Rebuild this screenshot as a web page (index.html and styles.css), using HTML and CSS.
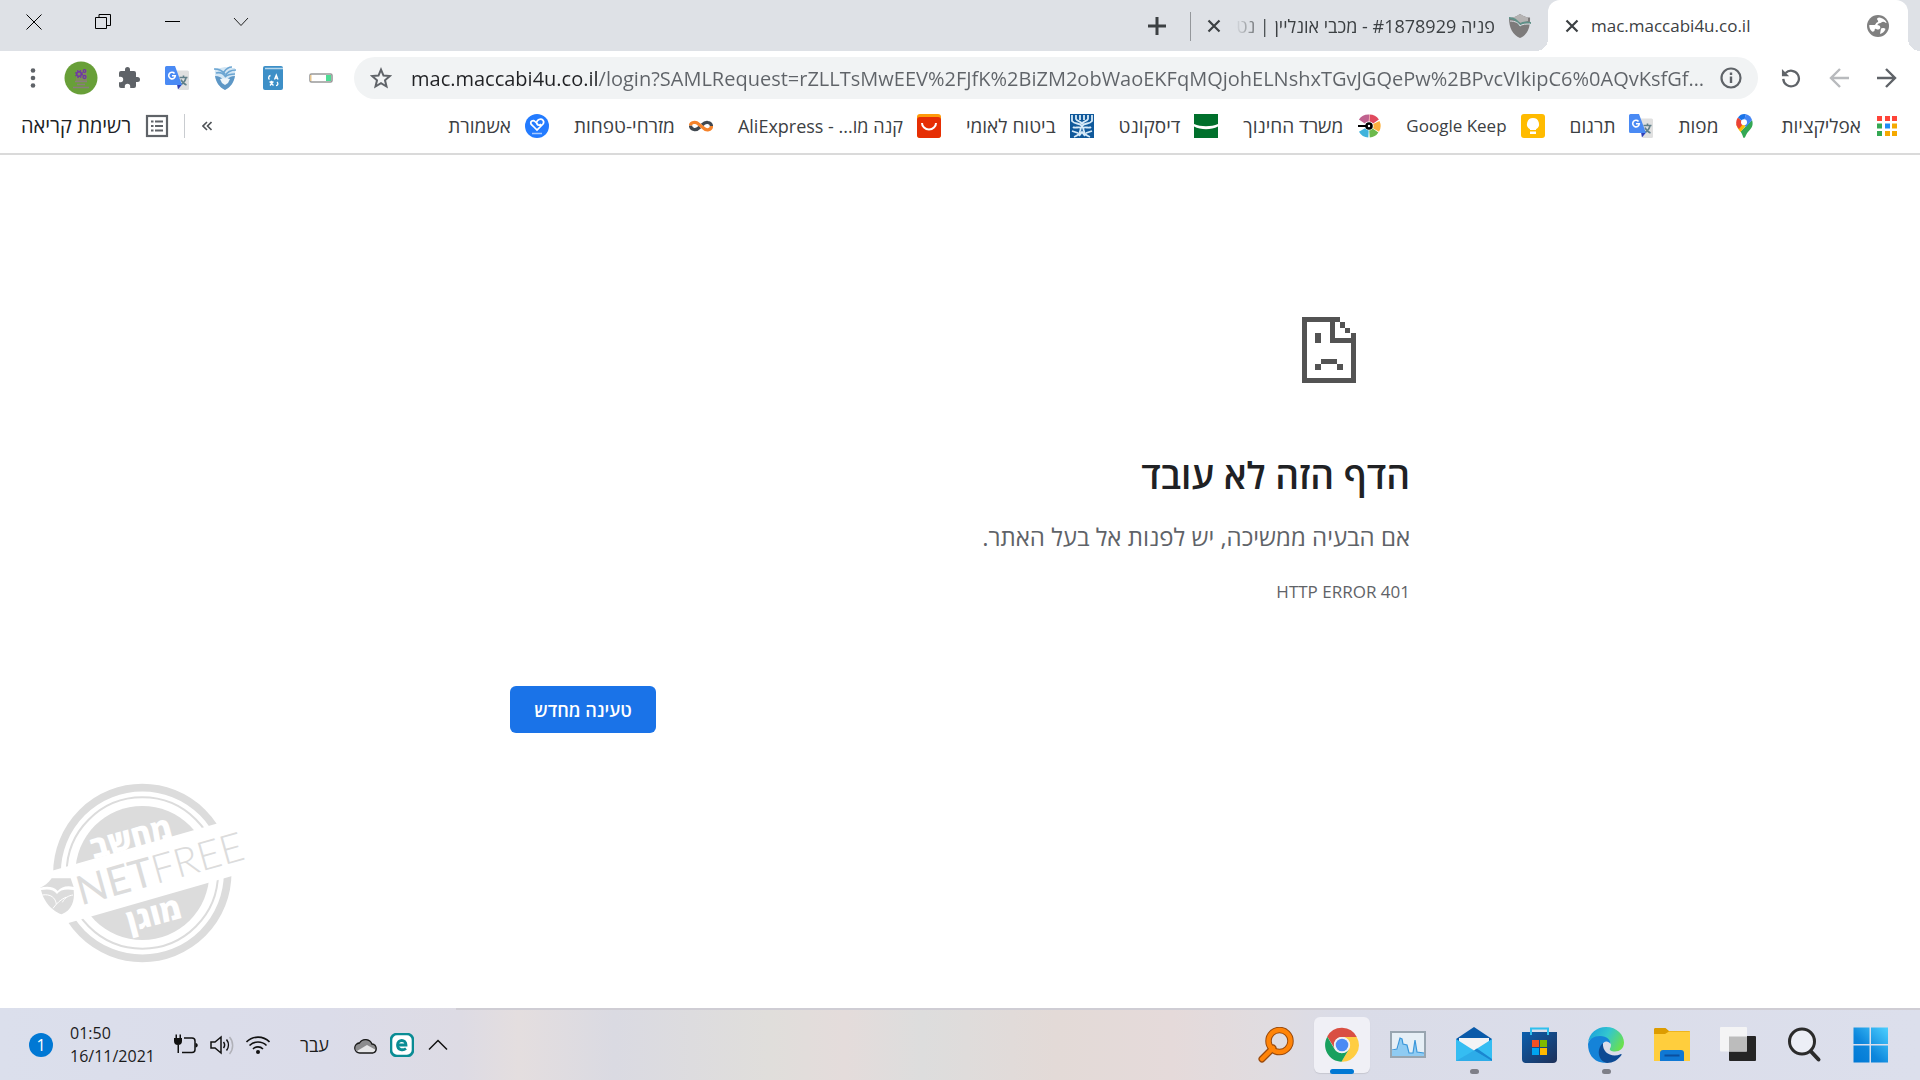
FILE: index.html
```
<!DOCTYPE html>
<html lang="he" dir="rtl">
<head>
<meta charset="utf-8">
<title>mac.maccabi4u.co.il</title>
<link rel="stylesheet" href="styles.css">
</head>
<body>
<svg class="defs" width="0" height="0" aria-hidden="true">
  <symbol id="translate" viewBox="0 0 24 24">
    <path fill="#e0e0e0" d="M10 4.500h12.500a1.500 1.500 0 0 1 1.500 1.500v16.500a1.500 1.500 0 0 1-1.500 1.500H14z"/>
    <path fill="none" stroke="#607f89" stroke-width="1.600" d="M14.500 11.500h8M18.500 9.500v2M16 13.500c1 2.500 3 4.500 5.500 5.500M21 11.500c-.5 3-3 6-5.500 7"/>
    <path fill="#3040b8" d="M12 18.500h5l-4 5z"/>
    <path fill="#4a8af4" d="M1.500 0H10l7 19H1.500A1.500 1.500 0 0 1 0 17.500v-16A1.500 1.500 0 0 1 1.500 0z"/>
    <path fill="none" stroke="#fff" stroke-width="1.600" d="M9.500 7.400A3.300 3.300 0 1 0 10.300 9.800H7"/>
  </symbol>
  <symbol id="close" viewBox="0 0 14 14"><path d="M1.500 1.500l11 11M12.500 1.500l-11 11" fill="none" stroke="#3c4043" stroke-width="2.200"/></symbol>
</svg>

<header class="browser">
  <div class="tabstrip">
    <div class="tabs">
      <div class="tab tab-active">
        <svg class="favicon" viewBox="0 0 22 22"><circle cx="11" cy="11" r="11" fill="#808080"/><path fill="#fff" d="M12 2.500c-2 .3-2.500 1.500-1.500 2.500s1 2-.5 2.500-1 2.500-3 2.500H2.300c-.3 3 1.200 5.300 3 6.700 1.700 0 2.400-.7 2.400-2s1.300-1.200 2-.5 3 .2 3.500-1-.5-3-2-3 0-2 1.500-2 1.800-1.500 3.500-1.500 2 1.500 3.400 1.200C19 5.500 16 2.800 12 2.500z"/><path fill="#fff" d="M14 13.500c1.500-1 3.500-.5 4.500.5-.8 2.500-3 4.500-5.500 5z"/></svg>
        <span class="tab-title" dir="ltr">mac.maccabi4u.co.il</span>
        <button class="tab-close" aria-label="סגירה"><svg viewBox="0 0 14 14"><use href="#close"/></svg></button>
      </div>
      <div class="tab tab-idle">
        <svg class="favicon" viewBox="0 0 22 24"><path fill="#7d7b7b" d="M0 4C5 4 8 2 11 0c3 2 6 3.500 10 3.500C21.500 14 18 21 11 24 4 21 0 14 0 4z"/><path fill="#b5b3b3" d="M3 3.500C6 3 9 1.500 11 0c3 2 5 3 8 3.300L19 7l-7 2-6-3z"/><path fill="none" stroke="#5f9188" stroke-width="2" d="M0 4c4 0 8 2 11 7 2-3 6-3 11-2"/><path fill="none" stroke="#dee1e6" stroke-width="1" d="M1 7c5 0 9 2 10 5 2-2 6-2 10-2"/></svg>
        <span class="tab-title">פניה #1878929 - מכבי אונליין | נטפרי</span>
        <button class="tab-close" aria-label="סגירה"><svg viewBox="0 0 14 14"><use href="#close"/></svg></button>
      </div>
      <button class="newtab" aria-label="כרטיסייה חדשה"><svg viewBox="0 0 18 18"><path d="M9 0v18M0 9h18" stroke="#3c4043" stroke-width="3"/></svg></button>
    </div>
    <div class="window-controls">
      <button aria-label="חיפוש"><svg viewBox="0 0 16 16"><path d="M1 4l7 7.500L15 4" fill="none" stroke="#222"/></svg></button>
      <button aria-label="מזעור"><svg viewBox="0 0 16 16"><path d="M1 7.500h15" stroke="#000"/></svg></button>
      <button aria-label="שחזור"><svg viewBox="0 0 16 16"><path d="M.5 3.500h11v11H.5zM4 3V.500h11.500v11H12" fill="none" stroke="#000"/></svg></button>
      <button aria-label="סגירה"><svg viewBox="0 0 16 16"><path d="M.5.500l15 15M15.500.500l-15 15" fill="none" stroke="#000"/></svg></button>
    </div>
  </div>

  <div class="toolbar">
    <nav class="nav-buttons">
      <button aria-label="קדימה"><svg viewBox="0 0 20 20"><path d="M0 10h18M9 1l9 9-9 9" fill="none" stroke="#5f6368" stroke-width="2.400"/></svg></button>
      <button aria-label="אחורה" disabled><svg viewBox="0 0 20 20"><path d="M20 10H2M11 1l-9 9 9 9" fill="none" stroke="#b8babd" stroke-width="2.400"/></svg></button>
      <button aria-label="טעינה מחדש"><svg viewBox="0 0 22 22"><path d="M5 5.500A8.600 8.600 0 1 1 2.500 12" fill="none" stroke="#5f6368" stroke-width="2.500"/><path d="M1 1v8h8z" fill="#5f6368"/></svg></button>
    </nav>
    <div class="omnibox">
      <svg class="i22" viewBox="0 0 22 22"><circle cx="11" cy="11" r="9.500" fill="none" stroke="#5f6368" stroke-width="2.200"/><path d="M11 9.500V16M11 5.500V8" stroke="#5f6368" stroke-width="2.400"/></svg>
      <input class="url" dir="ltr" aria-label="כתובת" value="mac.maccabi4u.co.il/login?SAMLRequest=rZLLTsMwEEV%2FJfK%2BiZM2obWaoEKFqMQjohELNshxTGvJGQePw%2BPvcVIkipC6%0AQvKsfGf…">
      <button class="star" aria-label="סימנייה"><svg class="i22" viewBox="0 0 22 22"><path d="M11 2.600l2.500 6 6.300.5-4.800 4.200 1.500 6.200-5.500-3.300-5.500 3.300L7 13.300 2.200 9.100l6.300-.5z" fill="none" stroke="#5f6368" stroke-width="2"/></svg></button>
    </div>
    <div class="extensions">
      <button aria-label="סוללה"><svg viewBox="0 0 24 24"><rect x="1" y="8" width="22" height="8" rx="1.500" fill="#fff" stroke="#999" stroke-width="1.600"/><path fill="#4ddc94" d="M17 9h5v6h-5z"/><path fill="#e7c58e" d="M1 9h1.500v6H1z"/></svg></button>
      <button aria-label="מילון"><svg viewBox="0 0 24 24"><rect x="2" y="0" width="20" height="24" rx="2" fill="#3d8fc7"/><path d="M4 2.500h18" stroke="#b8d8ec" stroke-width="1.500"/><path d="M8.500 13.500c-1.500-1-1-3.500 1-4M13.500 13.500l1.800-4.500 1.700 4.500M14 12.200h2.500M8.500 16h4M10.500 14.800v1.500M9 19.500l3-3.500M9.500 16.500l3 3M15 19.500c2 0 2.500-2 1-3.500" fill="none" stroke="#fff" stroke-width="1.300"/></svg></button>
      <button aria-label="נטפרי"><svg viewBox="0 0 24 24"><path fill="#d3e6f4" d="M2 2c4 0 7 0 10-1 3 1 6 1 10 1 1 11-3 18-10 22C5 20 1 13 2 2z"/><path fill="#5d97c6" d="M2 10c4 0 6 1 8 4l2-2 2 2c2-3 4-4 8-4-1 6-4 11-10 14C6 21 3 16 2 10z"/><path fill="#eef5fa" d="M7 13l5-1 5 1-2 4-3 2-3-2z"/><path d="M1 3c5 0 8 1 11 5M3 7c4-1 7 0 9 3 2-4 6-6 11-6M11 6c2-3 5-5 8-5M12 11c3-3 6-3 10-3" fill="none" stroke="#6ba5d2" stroke-width="1.600"/></svg></button>
      <button aria-label="תרגום"><svg viewBox="0 0 24 24"><use href="#translate"/></svg></button>
      <button aria-label="תוספים"><svg viewBox="0 0 24 24"><path fill="#5f6368" d="M20.500 11H19V7a2 2 0 0 0-2-2h-4V3.500a2.500 2.500 0 0 0-5 0V5H4a2 2 0 0 0-2 2v3.800h1.500a2.700 2.700 0 0 1 0 5.400H2V20a2 2 0 0 0 2 2h3.800v-1.500a2.700 2.700 0 0 1 5.400 0V22H17a2 2 0 0 0 2-2v-4h1.500a2.500 2.500 0 0 0 0-5z"/></svg></button>
      <button class="profile" aria-label="פרופיל"><svg viewBox="0 0 34 34"><circle cx="17" cy="17" r="16.500" fill="#689f38"/><path fill="#7d8c5a" d="M12 9h11v11H12z"/><g fill="none" stroke="#6f35a5"><circle cx="15" cy="13" r="2.300" stroke-width="1.500"/><circle cx="15" cy="13" r="3.500" stroke-width="1.200" stroke-dasharray="1.400 1.400"/><circle cx="20.500" cy="10" r="1.300" stroke-width="1.200"/><circle cx="20.500" cy="16" r="1.500" stroke-width="1.300"/></g><path d="M11 20.500h12M13 23.500h8M9 26.500h16" stroke="#8a7b7e" stroke-width="1.500"/></svg></button>
      <button aria-label="תפריט"><svg viewBox="0 0 24 24"><g fill="#5f6368"><circle cx="12" cy="4.500" r="2.300"/><circle cx="12" cy="12" r="2.300"/><circle cx="12" cy="19.500" r="2.300"/></g></svg></button>
    </div>
  </div>

  <nav class="bookmarks">
    <a href="#apps"><svg viewBox="0 0 24 24"><path fill="#ff4438" d="M2 2h5v5H2zM10 2h5v5h-5zM17 2h5v5h-5z"/><path fill="#34a853" d="M2 9.500h5v5H2zM2 17h5v5H2z"/><path fill="#1e8cf5" d="M10 9.500h5v5h-5z"/><path fill="#f5a900" d="M17 9.500h5v5h-5zM10 17h5v5h-5zM17 17h5v5h-5z"/></svg><span>אפליקציות</span></a>
    <a href="#maps"><svg viewBox="0 0 24 24"><path fill="#34a853" d="M12 24c-1.200 0-1-3-3.500-6.500L20 6c2 6-1 8.500-4 12-2.500 3-2.700 6-4 6z"/><path fill="#fbbc04" d="M8.500 18c-1.800-2.300-3.600-4.500-4.200-7.500L15 10z"/><path fill="#ea4335" d="M4.300 10.500c-.5-2.500.2-5 1.700-7L12 9l-5 6c-1.300-1.500-2.300-3-2.700-4.500z"/><path fill="#1a73e8" d="M6 3.500A8 8 0 0 1 14 .200L12 7 9.500 6.500z"/><path fill="#4285f4" d="M14 .200c3 .6 5.200 2.800 6 5.800l-6 7-3-4z"/><circle cx="12" cy="8.300" r="3" fill="#fff"/></svg><span>מפות</span></a>
    <a href="#translate-page"><svg viewBox="0 0 24 24"><use href="#translate"/></svg><span>תרגום</span></a>
    <a href="#keep"><svg viewBox="0 0 24 24"><rect width="24" height="24" rx="3" fill="#fb0"/><path fill="#fff" d="M12 4a6 6 0 0 1 3 11.200V16H9v-.8A6 6 0 0 1 12 4zM9 17.500h6V20H9z"/></svg><span class="latin">Google Keep</span></a>
    <a href="#edu"><svg viewBox="0 0 24 24"><g fill="none" stroke-width="7"><path stroke="#c0628f" d="M4.800 7.500A8 8 0 0 1 12 4"/><path stroke="#e04a5e" d="M12.500 4A8 8 0 0 1 19 7.500"/><path stroke="#fdb03d" d="M19.300 8.500a8 8 0 0 1-.3 7.500"/><path stroke="#6cb94b" d="M18.500 16.500A8 8 0 0 1 12.500 20"/><path stroke="#3fb3dc" d="M11.500 20A8 8 0 0 1 5 16"/></g><circle cx="12" cy="12" r="3.800"/><path d="M1 12h8" stroke="#000" stroke-width="2"/><circle cx="12" cy="12" r="1.200" fill="#fff"/></svg><span>משרד החינוך</span></a>
    <a href="#discount"><svg viewBox="0 0 24 24"><path fill="#00702c" d="M0 0h24v24H0z"/><path fill="#fff" d="M0 10c7 3 17 3 24 0v2.500c-7 3.500-17 3.500-24 0z"/></svg><span>דיסקונט</span></a>
    <a href="#btl"><svg viewBox="0 0 24 24"><path fill="#10599b" d="M0 0h24v24H0z"/><path d="M2 1v6c3 4 7 1 10 5s0 8 8 11M22 1v6c-3 4-7 1-10 5s0 8-8 11M6 1v4c1 3 5 1 6 5 1-4 5-2 6-5V1M10 1v5M14 1v5M3 13c2 2 6-1 8 1M21 13c-2 2-6-1-8 1M2 17l6 2M22 17l-6 2M9 22l3-4 3 4" fill="none" stroke="#d7eaf8" stroke-width="1.800"/></svg><span>ביטוח לאומי</span></a>
    <a href="#ali"><svg viewBox="0 0 24 24"><rect width="24" height="24" rx="3" fill="#ff9a0a"/><path fill="#e62e04" d="M0 6c0-2 1-3 3-3h18c2 0 3 1 3 3v15a3 3 0 0 1-3 3H3a3 3 0 0 1-3-3z"/><path d="M5 9a7 6.500 0 0 0 14 0" fill="none" stroke="#fff" stroke-width="2"/></svg><span class="mixed" dir="ltr">AliExpress - ...קנה מו</span></a>
    <a href="#mizrahi"><svg viewBox="0 0 24 24"><g fill="none" stroke-width="3.200"><path stroke="#414850" d="M13 11c2-2 4-3 6-2.500 2.500.5 3.500 2 3.500 4M11 13c-2 2-4 3-6 2.500-2.500-.5-3.500-2-3.500-4"/><path stroke="#f5832b" d="M1.500 11.500c0-3 5-4.500 8-1.500l5 4c3 3 8 2 8-2"/></g></svg><span>מזרחי-טפחות</span></a>
    <a href="#ashmoret"><svg viewBox="0 0 24 24"><circle cx="12" cy="12" r="12" fill="#237bff"/><path d="M13 10.500L10 7.500c-2-2-5 0-4 2.500.5 1 1.500 1.500 3 3l3 3 6-6c2-3-1-6-4-4.500-2 1-3 3-2 4.500s3 1.500 4 0" fill="none" stroke="#fff" stroke-width="1.700"/><path d="M7 19.500h10" stroke="#a9cbff" stroke-width="1.500"/></svg><span>אשמורת</span></a>
    <div class="bookmarks-end">
      <button class="more" aria-label="עוד סימניות"><svg viewBox="0 0 10 10"><path d="M5 1L1 5l4 4M9.500 1l-4 4 4 4" fill="none" stroke="#4f5357" stroke-width="1.600"/></svg></button>
      <button class="reading"><svg viewBox="0 0 24 24"><rect x="2" y="2" width="20" height="20" fill="none" stroke="#5f6368" stroke-width="2.200"/><path d="M6 7.500h2.500M6 12h2.500M6 16.500h2.500M10 7.500h8M10 12h8M10 16.500h8" stroke="#5f6368" stroke-width="2"/></svg><span>רשימת קריאה</span></button>
    </div>
  </nav>
</header>

<main class="page">
  <div class="error">
    <svg class="sad" viewBox="0 0 54 66" fill="#535353" shape-rendering="crispEdges"><path d="M0 0h38v5H5v56h44V26H28V5h5v16h16v-5h5v50H0z"/><path d="M38 5h5v6h-5zM43 11h5v5h-5zM13 16h6v10h-6zM19 42h16v5H19zM13 47h6v6h-6zM35 47h6v6h-6z"/></svg>
    <h1>הדף הזה לא עובד</h1>
    <p class="lead">אם הבעיה ממשיכה, יש לפנות אל בעל האתר.</p>
    <p class="code">HTTP ERROR 401</p>
    <button class="reload">טעינה מחדש</button>
  </div>
  <svg class="stamp" viewBox="50 35 630 546" direction="ltr">
    <g fill="none" stroke="#dcdcdc"><circle cx="366" cy="308" r="256" stroke-width="23"/><circle cx="366" cy="308" r="227" stroke-width="6"/></g>
    <circle cx="366" cy="308" r="201" fill="#dcdcdc"/>
    <path fill="#fff" d="M40 317L690 131v170L40 488z"/>
    <g transform="rotate(-15.700 190 403)" fill="#dcdcdc"><text class="net" x="182" y="403">NET<tspan class="free">FREE</tspan></text></g>
    <g transform="rotate(-15 335 213)" fill="#fff"><text class="he" x="335" y="234" text-anchor="middle">מחשב</text></g>
    <g transform="rotate(-15 403 440)" fill="#fff"><text class="he" x="403" y="464" text-anchor="middle">מוגן</text></g>
    <path fill="#dcdcdc" d="M94 324h57l9 26c-20-5-38 0-48 12-11-13-32-16-54-9 14-6 26-14 36-29z"/>
    <path fill="#dcdcdc" d="M62 359c22-4 38-2 48 12 9-13 28-16 50-12 4 33-6 61-36 73-10-3-50-22-62-73z"/>
    <path d="M66 374c24-4 40 8 42 28M126 396c8-14 18-20 32-22M98 414c10-14 22-26 40-34" fill="none" stroke="#fff" stroke-width="3"/>
  </svg>
</main>

<footer class="taskbar">
  <div class="apps">
    <button aria-label="התחל"><svg viewBox="0 0 36 36"><defs><linearGradient id="win" x1="1" y1="0" x2="0" y2="1"><stop offset="0" stop-color="#4cd0ff"/><stop offset=".6" stop-color="#0d86dc"/><stop offset="1" stop-color="#0078d4"/></linearGradient></defs><path fill="url(#win)" d="M1.500.500h16v16.500h-16zM19 .500h17v16.500H19zM1.500 18.500h16v17h-16zM19 18.500h17v17H19z"/></svg></button>
    <button aria-label="חיפוש"><svg viewBox="0 0 36 36"><circle cx="16" cy="14.500" r="12.500" fill="#eceef6" stroke="#2b2b2b" stroke-width="3"/><path d="M25 24.500l7.500 8" stroke="#2b2b2b" stroke-width="4" stroke-linecap="round"/></svg></button>
    <button aria-label="תצוגת משימות"><svg viewBox="0 0 36 36"><rect x="9" y="9" width="27" height="25" rx="1" fill="#252525"/><rect x="0" y="0" width="27" height="24.500" rx="1" fill="#f4f4f5"/><path fill="#bcbcbc" d="M9 9.500h18v15H9z"/></svg></button>
    <button aria-label="סייר הקבצים"><svg viewBox="0 0 36 36"><path fill="#dd9c00" d="M0 2.500C0 1.500.5 1 1.500 1h10L15 4h20c.5 0 1 .5 1 1v5H0z"/><path fill="#ffce3d" d="M0 7h11l4-2.500h21V34H0z"/><path fill="#0f78d4" d="M6 34V26c0-2 1-3 3-3h18c2 0 3 1 3 3v8z"/><path d="M10.500 28.500h15" stroke="#0b4f9e" stroke-width="2"/></svg></button>
    <button class="running" aria-label="Edge"><svg viewBox="0 0 36 36"><defs><linearGradient id="edge" x1="0" y1=".2" x2="1" y2=".6"><stop offset="0" stop-color="#1aa0dc"/><stop offset=".5" stop-color="#33c6cf"/><stop offset="1" stop-color="#6ae04f"/></linearGradient></defs><path fill="url(#edge)" d="M0 16C1 6 9 0 18 0c11 0 18 8 18 15.500 0 6-4.500 9-9 9-4 0-6-1.500-5-3 2-3 1-8-4-9C10 10 1 11 0 16z"/><path fill="#1583d8" d="M0 17C1 12 6 9 12 9c7 0 10.500 4 10.500 8-2-4-8-3.500-8.500 2s4 12 11 13.500c-3 3.500-8 3.500-11 3C5 34 0 27 0 17z"/><path fill="#0c4a94" d="M15 16c-7 6-5 18 4 20 6 0 11-3 14.500-8 .3-.7-.3-1.200-1-.8C24 31 14 26 15 16z"/></svg></button>
    <button aria-label="Microsoft Store"><svg viewBox="0 0 36 36"><defs><linearGradient id="store" x1="0" y1="0" x2="1" y2="1"><stop offset="0" stop-color="#0b5fae"/><stop offset="1" stop-color="#1e3058"/></linearGradient></defs><path d="M9 8V1.500h17V8" fill="none" stroke="#2fc0ee" stroke-width="2"/><path fill="url(#store)" d="M0 5h35v27a4 4 0 0 1-4 4H4a4 4 0 0 1-4-4z"/><path fill="#f25022" d="M10 13h7v7h-7z"/><path fill="#7fba00" d="M18 13h7v7h-7z"/><path fill="#00a4ef" d="M10 21h7v7h-7z"/><path fill="#ffb900" d="M18 21h7v7h-7z"/><path d="M9 8V5M26 8V5" stroke="#2fc0ee" stroke-width="2"/></svg></button>
    <button class="running" aria-label="דואר"><svg viewBox="0 0 36 36"><path fill="#0a5aa9" d="M0 12L18 0l18 12v6H0z"/><path fill="#f3f3f5" d="M3 11h30v10L18 28 3 21z"/><path fill="#35bdf2" d="M0 12l18 11.500L36 12v22H0z"/><path fill="#1a86d0" d="M18 23.500L36 34H0z" opacity=".3"/><path fill="#1a86d0" d="M14 21l4 2.500 3-2L36 32v2z"/></svg></button>
    <button aria-label="מוניטור משאבים"><svg viewBox="0 0 36 36"><rect x="1" y="5" width="34" height="25" fill="#e6eff6" stroke="#98a5b0" stroke-width="2"/><path fill="#8fcbf2" d="M2 24l6-2 2-11 2 1 1 5 4 1 2 8h4l2-13 2 12 7 1v3H2z"/><path fill="none" stroke="#3a97da" stroke-width="1.200" d="M2 23l5-1 3-11 2 1 1 5 4 1 2 8h4l2-13 2 12 7 1"/></svg></button>
    <button class="running current" aria-label="Chrome"><svg viewBox="0 0 36 36"><path fill="#d94f43" d="M3.200 9.500A16.600 16.600 0 0 1 32.800 10H18a8 8 0 0 0-7 12z"/><path fill="#ffcd42" d="M32.700 10A16.600 16.600 0 0 1 17.500 34.700L25 22a8 8 0 0 0-7-12z"/><path fill="#18a05e" d="M3.300 9.800A16.600 16.600 0 0 0 17.500 34.700L25 22c-4 6-12 5-14.500 0z"/><circle cx="18" cy="18" r="8" fill="#f1f1f1"/><circle cx="18" cy="18" r="6.300" fill="#4a8af4"/></svg></button>
    <button aria-label="Everything"><svg viewBox="0 0 36 36"><g fill="none" stroke-linecap="round"><path d="M15 21L4 32" stroke="#9a4a0c" stroke-width="7"/><circle cx="21.500" cy="14" r="11" stroke="#9a4a0c" stroke-width="6.500"/><path d="M15 21L4 32" stroke="#ff8408" stroke-width="4.500"/><circle cx="21.500" cy="14" r="11" stroke="#ff8408" stroke-width="4.500"/></g></svg></button>
  </div>
  <div class="tray">
    <button aria-label="הצגת סמלים מוסתרים"><svg viewBox="0 0 24 24"><path d="M3 16.500L12 7.500l9 9" fill="none" stroke="#111" stroke-width="1.500"/></svg></button>
    <svg viewBox="0 0 24 24"><rect x="1" y="1" width="22" height="22" rx="6" fill="#fff" stroke="#0a8c94" stroke-width="2.600"/><path d="M7.500 12h8.500c0-6-8.500-6-8.500 0 0 5.500 6 5.500 8.500 3.500" fill="none" stroke="#0a8c94" stroke-width="2.800"/></svg>
    <svg viewBox="0 0 24 24"><path fill="#8c8c8e" d="M6 19a5 5 0 0 1 0-10 7 7 0 0 1 12 1 4.600 4.600 0 0 1 1 9z"/><path fill="#e6e6e8" d="M3 18l10-6 9 5-3 3H6z"/><path fill="none" stroke="#1a1a1a" stroke-width="1.300" d="M6 20a5 5 0 0 1-.5-10 7 7 0 0 1 12.500 1.200A4.500 4.500 0 0 1 19 20z"/></svg>
    <button class="lang">עבר</button>
    <svg viewBox="0 0 24 24"><g fill="none" stroke="#111" stroke-width="1.600"><path d="M.5 9a16 16 0 0 1 23 0M3.500 12.500a12 12 0 0 1 17 0M7 16a7 7 0 0 1 10 0"/></g><circle cx="12" cy="19" r="2" fill="#111"/></svg>
    <svg viewBox="0 0 24 24"><path d="M1 9h4l6-5v16l-6-5H1z" fill="none" stroke="#111" stroke-width="1.500"/><path d="M13.500 9a5 5 0 0 1 0 6M16.500 6.500a9 9 0 0 1 0 11" fill="none" stroke="#111" stroke-width="1.500"/><path d="M19.500 4a13 13 0 0 1 0 17" fill="none" stroke="#b0b1b8" stroke-width="1.500"/></svg>
    <svg viewBox="0 0 24 24"><path d="M10 5h8a3 3 0 0 1 3 3v8.500a3 3 0 0 1-3 3H8" fill="none" stroke="#111" stroke-width="1.500"/><path d="M0 5h8v3a4 4 0 0 1-8 0zM1.500 1.500h1.500V5H1.500zM5.500 1.500H7V5H5.500zM3.500 11H5v9H3.500zM21.500 10c3 0 3 4.500 0 4.500z" fill="#111"/></svg>
    <div class="clock" dir="ltr"><span>01:50</span><span>16/11/2021</span></div>
    <span class="badge">1</span>
  </div>
</footer>
</body>
</html>
```
FILE: styles.css
```
* { box-sizing: border-box; }
html, body { height: 100%; }
body {
  margin: 0;
  display: flex;
  flex-direction: column;
  font-family: "Open Sans", "Noto Sans", sans-serif;
  font-size: 16px;
  color: #3c4043;
  background: #fff;
}
.defs { position: absolute; }
button {
  margin: 0;
  padding: 0;
  border: 0;
  background: none;
  font: inherit;
  color: inherit;
  display: flex;
  align-items: center;
  justify-content: center;
}
svg { display: block; flex: none; }

/* tab strip */
.tabstrip {
  display: flex;
  justify-content: space-between;
  height: 51px;
  padding-right: 12px;
  background: #dee1e6;
}
.tabs { display: flex; }
.tab { display: flex; align-items: center; width: 360px; height: 51px; }
.tab-active {
  position: relative;
  padding: 0 19px 0 17px;
  background: #fff;
  border-radius: 12px 12px 0 0;
}
.tab-active::before, .tab-active::after {
  content: "";
  position: absolute;
  bottom: 0;
  width: 12px;
  height: 12px;
}
.tab-active::before { left: -12px; background: radial-gradient(circle at 0 0, transparent 12px, #fff 12px); }
.tab-active::after { right: -12px; background: radial-gradient(circle at 100% 0, transparent 12px, #fff 12px); }
.tab-idle {
  width: 358px;
  padding: 0 17px;
  background: linear-gradient(#94979b, #94979b) left 12px / 1px 29px no-repeat;
}
.favicon { width: 22px; height: 24px; }
.tab-title {
  flex: 1;
  min-width: 0;
  overflow: hidden;
  margin: 0 14px;
  white-space: nowrap;
}
.tab-active .tab-title { margin-left: 12px; font-size: 17px; }
.tab-idle .tab-title {
  font-size: 18px;
  -webkit-mask-image: linear-gradient(to left, #000 88%, transparent);
  mask-image: linear-gradient(to left, #000 88%, transparent);
}
.tab-close { width: 14px; height: 14px; }
.tab-close svg { width: 14px; height: 14px; }
.newtab { width: 66px; height: 51px; }
.newtab svg { width: 18px; height: 18px; }
.window-controls { display: flex; height: 44px; }
.window-controls button { width: 69px; padding-right: 2px; }
.window-controls svg { width: 16px; height: 16px; }

/* toolbar */
.toolbar { display: flex; align-items: center; height: 54px; padding: 0 9px; }
.nav-buttons { display: flex; }
.nav-buttons button { width: 48px; height: 42px; }
.nav-buttons svg { width: 20px; height: 20px; }
.omnibox {
  flex: 1;
  display: flex;
  align-items: center;
  height: 42px;
  margin: 0 9px;
  padding: 0 16px;
  border-radius: 21px;
  background: #f1f3f4;
}
.i22 { width: 22px; height: 22px; }
.url {
  flex: 1;
  min-width: 0;
  margin: 0 10px 0 19px;
  padding: 0;
  border: 0;
  outline: 0;
  font: inherit;
  font-size: 20px;
  color: transparent;
  background: linear-gradient(to right, #202124 188px, #5f6368 188px);
  background-clip: text;
}
.extensions { display: flex; align-items: center; }
.extensions button { width: 48px; height: 42px; }
.extensions svg { width: 24px; height: 24px; }
.extensions .profile svg { width: 34px; height: 34px; }

/* bookmarks */
.bookmarks {
  display: flex;
  align-items: center;
  gap: 25px;
  height: 50px;
  padding: 0 21px 6px;
  border-bottom: 2px solid #dadada;
  font-size: 19px;
  line-height: 24px;
}
.bookmarks a, .reading {
  display: flex;
  align-items: center;
  gap: 14px;
  color: #3c4043;
  text-decoration: none;
  white-space: nowrap;
}
.bookmarks .latin { font-size: 17px; }
.bookmarks .mixed { font-size: 18px; }
.bookmarks svg { width: 24px; height: 24px; }
.bookmarks-end { display: flex; align-items: center; margin-right: auto; }
.bookmarks .more svg { width: 10px; height: 10px; }
.more { padding: 0 0 0 17px; }
.bookmarks .reading {
  padding-right: 15px;
  border-right: 1px solid #c9ccd0;
  font-size: 20px;
  color: #202124;
}

/* error page */
.page { position: relative; flex: 1; }
.error { width: 900px; max-width: 100%; margin: 0 auto; padding-top: 162px; color: #5f6368; }
.sad { width: 54px; height: 66px; margin-right: 54px; }
h1 { margin: 64px 0 0; font-size: 37px; line-height: 56px; font-weight: 600; color: #202124; }
.lead { margin: 16px 0 0; font-size: 24px; line-height: 36px; }
.code { margin: 22px 0 0; font-size: 17px; line-height: 30px; }
.reload {
  width: 146px;
  height: 47px;
  margin: 79px auto 0 0;
  border-radius: 6px;
  font-size: 18px;
  font-weight: 600;
  color: #fff;
  background: #1a73e8;
}
.stamp { position: absolute; left: 37px; bottom: 44px; width: 210px; height: 182px; overflow: visible; }
.net { font: 400 121px Lato, sans-serif; }
.free { font-weight: 300; }
.he { font: 800 92px "Open Sans", sans-serif; }

/* taskbar */
.taskbar {
  display: flex;
  justify-content: space-between;
  align-items: center;
  height: 72px;
  padding: 2px 22px 0 29px;
  background:
    linear-gradient(#cfcdd4, #cfcdd4) 456px 0 / 100% 2px no-repeat,
    linear-gradient(to right, #dbdfec 0, #dbdce9 17%, #dddbe4 24%, #e4dedf 27%, #dadae2 32%, #e0dedb 40%, #e4dcdb 44%, #dddddd 48%, #e3dad7 55%, #e5dada 61%, #e0dce0 66%, #dadce8 70%, #dcdfec 100%);
}
.apps { display: flex; gap: 10px; }
.apps button { position: relative; width: 56px; height: 56px; border-radius: 6px; }
.apps svg { width: 36px; height: 36px; }
.running::after {
  content: "";
  position: absolute;
  left: 24px;
  bottom: -1px;
  width: 9px;
  height: 5px;
  border-radius: 3px;
  background: #7e7f88;
}
.apps .current { background: #f0f0f6; box-shadow: 0 1px 1px #c6c7d0; }
.current::after { left: 16px; width: 24px; background: #0078d4; }
.tray { display: flex; align-items: center; gap: 12px; color: #1b1b1b; }
.tray svg { width: 24px; height: 24px; }
.lang { margin: 0 13px 0 18px; font-size: 18px; }
.clock { display: flex; flex-direction: column; line-height: 23px; margin: 0 7px 0 5px; }
.badge {
  width: 24px;
  height: 24px;
  border-radius: 12px;
  line-height: 24px;
  text-align: center;
  color: #fff;
  background: #0078d4;
}
```
